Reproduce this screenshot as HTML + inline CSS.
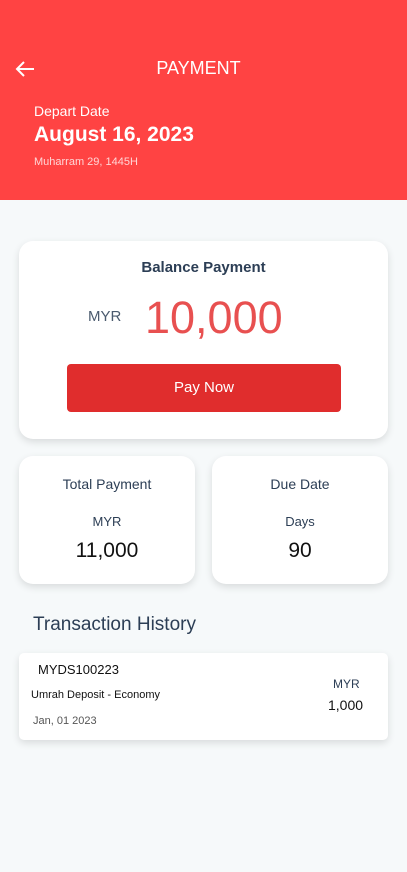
<!DOCTYPE html>
<html><head><meta charset="utf-8"><style>
*{margin:0;padding:0;box-sizing:border-box}
body{width:407px;height:872px;background:#f6f9fa;font-family:"Liberation Sans",sans-serif;position:relative;overflow:hidden}
.a{position:absolute}
.hdr{left:0;top:0;width:407px;height:200px;background:#ff4343}
.card{background:#fff;border-radius:14px;box-shadow:0 3px 8px rgba(0,0,0,0.12)}
</style></head><body>
<div class="a hdr"></div>
<svg class="a" style="left:15px;top:60px" width="20" height="18" viewBox="0 0 20 18"><path d="M19 9H2M9 2L2 9l7 7" fill="none" stroke="#fff" stroke-width="2"/></svg>
<div class="a" style="left:0;width:397px;top:58px;text-align:center;color:#fff;font-size:18px">PAYMENT</div>
<div class="a" style="left:34px;top:103px;color:#fff;font-size:14px">Depart Date</div>
<div class="a" style="left:34px;top:123px;color:#fff;font-size:21px;font-weight:bold">August 16, 2023</div>
<div class="a" style="left:34px;top:156px;color:#ffd6d6;font-size:11px">Muharram 29, 1445H</div>

<div class="a card" style="left:19px;top:241px;width:369px;height:198px"></div>
<div class="a" style="left:19px;width:369px;top:259px;text-align:center;font-weight:bold;font-size:15px;color:#2c3e55">Balance Payment</div>
<div class="a" style="left:88px;top:308px;font-size:15px;color:#4a5a6e">MYR</div>
<div class="a" style="left:145px;top:292px;font-size:45px;color:#e85050">10,000</div>
<div class="a" style="left:67px;top:364px;width:274px;height:48px;background:#e02d2d;border-radius:4px;color:#fff;font-size:15px;text-align:center;line-height:48px">Pay Now</div>

<div class="a card" style="left:19px;top:456px;width:176px;height:128px"></div>
<div class="a" style="left:19px;width:176px;top:476px;text-align:center;font-size:14px;color:#2c3e55">Total Payment</div>
<div class="a" style="left:19px;width:176px;top:514px;text-align:center;font-size:13px;color:#2c3e55">MYR</div>
<div class="a" style="left:19px;width:176px;top:539px;text-align:center;font-size:21px;color:#111">11,000</div>
<div class="a card" style="left:212px;top:456px;width:176px;height:128px"></div>
<div class="a" style="left:212px;width:176px;top:476px;text-align:center;font-size:14px;color:#2c3e55">Due Date</div>
<div class="a" style="left:212px;width:176px;top:514px;text-align:center;font-size:13px;color:#2c3e55">Days</div>
<div class="a" style="left:212px;width:176px;top:539px;text-align:center;font-size:21px;color:#111">90</div>

<div class="a" style="left:33px;top:614px;font-size:19px;color:#2c3e55">Transaction History</div>
<div class="a card" style="left:19px;top:653px;width:369px;height:87px;border-radius:5px"></div>
<div class="a" style="left:38px;top:662px;font-size:13px;color:#111">MYDS100223</div>
<div class="a" style="left:31px;top:689px;font-size:11px;color:#111">Umrah Deposit - Economy</div>
<div class="a" style="left:33px;top:715px;font-size:11px;color:#555">Jan, 01 2023</div>
<div class="a" style="left:333px;top:677px;font-size:12px;color:#2c3e55">MYR</div>
<div class="a" style="left:328px;top:697px;font-size:14px;color:#111">1,000</div>
</body></html>
